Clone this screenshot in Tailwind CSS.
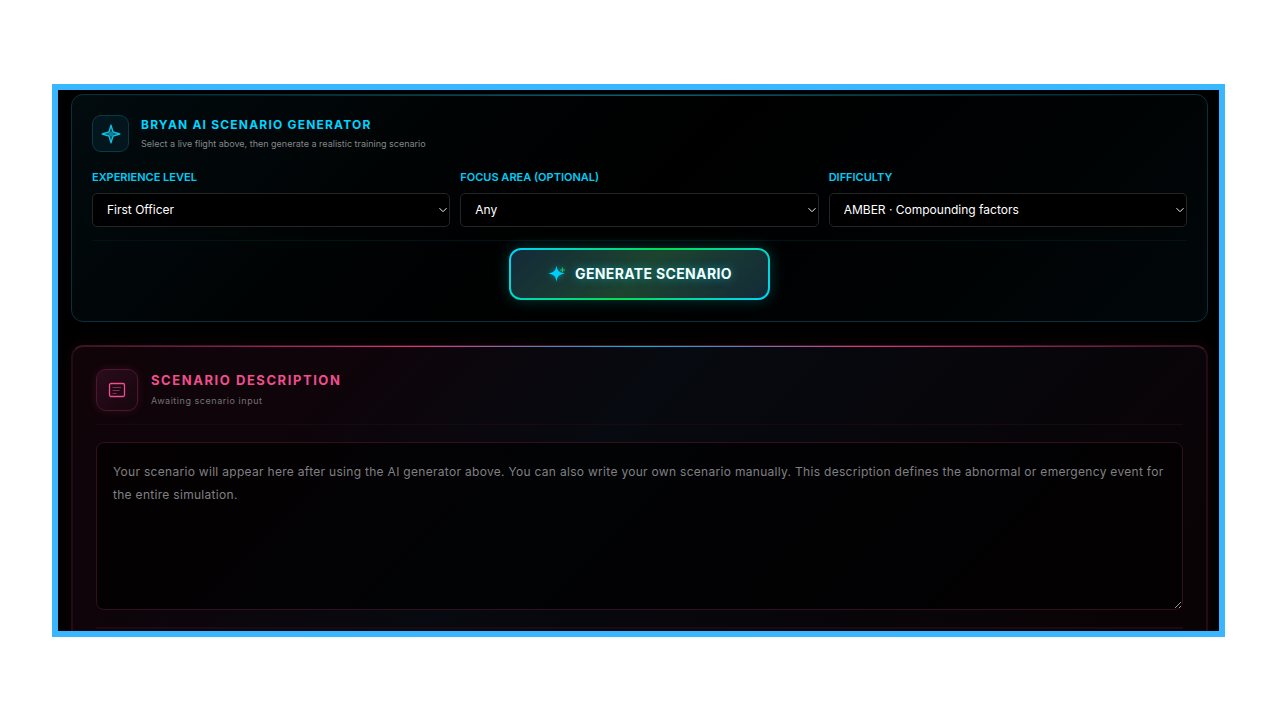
<!DOCTYPE html>
<html lang="en">
<head>
<meta charset="utf-8">
<meta name="viewport" content="width=device-width, initial-scale=1">
<title>Bryan AI Scenario Generator</title>
<script src="https://cdn.jsdelivr.net/npm/@tailwindcss/browser@4"></script>
</head>
<body class="bg-white font-['Inter',sans-serif]">
<main class="flex h-screen flex-col pt-[84px] pr-[55px] pb-[83px] pl-[52px]">
  <div class="flex min-h-0 flex-1 flex-col gap-[23px] overflow-hidden border-6 border-[#38b6ff] bg-black pt-1 pr-[11px] pl-[13px]">

    <section class="relative shrink-0 rounded-xl border border-[#07323d] bg-[linear-gradient(135deg,#020b0e_0%,#000304_30%,#000000_50%,#000203_70%,#010709_100%)] px-5 pt-5 pb-[21px]">
      <div class="absolute inset-x-3 top-0 h-px bg-[linear-gradient(90deg,transparent,#0d5f6e,transparent)]"></div>
      <header class="flex items-center gap-3">
        <div class="flex size-[37px] shrink-0 items-center justify-center rounded-[9px] border border-[#0a3a45] bg-[#04161d]">
          <svg class="size-5" viewBox="0 0 20 20" fill="none" aria-hidden="true">
            <path d="M10 1.200 12 8l6.800 2-6.800 2-2 6.800L8 12l-6.800-2L8 8Z" fill="#073c4a" stroke="#10bfe0" stroke-width="1.400" stroke-linejoin="round"/>
            <circle cx="10" cy="10" r="2.600" fill="#0b819c"/>
          </svg>
        </div>
        <div>
          <h2 class="text-xs leading-5 font-bold tracking-widest text-[#00d4ff]">BRYAN AI SCENARIO GENERATOR</h2>
          <p class="text-[9px] leading-[17px] text-[#858788]">Select a live flight above, then generate a realistic training scenario</p>
        </div>
      </header>

      <form class="mt-4">
        <div class="grid grid-cols-3 gap-[10px]">
          <div>
            <label for="experience" class="block text-[11px] leading-[18px] font-semibold text-[#00cdf5]">EXPERIENCE LEVEL</label>
            <div class="relative mt-[7px]">
              <select id="experience" class="block h-[34px] w-full appearance-none rounded-[5px] border border-[#242626] bg-black px-[14px] text-xs text-white"><option>First Officer</option></select>
              <svg class="pointer-events-none absolute top-[13px] right-[3px] h-2 w-2" viewBox="0 0 8 8" fill="none" stroke="#f0f0f0" aria-hidden="true"><path d="m.5 2.200 3.500 3.500 3.500-3.500"/></svg>
            </div>
          </div>
          <div>
            <label for="focus" class="block text-[11px] leading-[18px] font-semibold text-[#00cdf5]">FOCUS AREA (OPTIONAL)</label>
            <div class="relative mt-[7px]">
              <select id="focus" class="block h-[34px] w-full appearance-none rounded-[5px] border border-[#242626] bg-black px-[14px] text-xs text-white"><option>Any</option></select>
              <svg class="pointer-events-none absolute top-[13px] right-[3px] h-2 w-2" viewBox="0 0 8 8" fill="none" stroke="#f0f0f0" aria-hidden="true"><path d="m.5 2.200 3.500 3.500 3.500-3.500"/></svg>
            </div>
          </div>
          <div>
            <label for="difficulty" class="block text-[11px] leading-[18px] font-semibold text-[#00cdf5]">DIFFICULTY</label>
            <div class="relative mt-[7px]">
              <select id="difficulty" class="block h-[34px] w-full appearance-none rounded-[5px] border border-[#242626] bg-black px-[14px] text-xs text-white"><option>AMBER · Compounding factors</option></select>
              <svg class="pointer-events-none absolute top-[13px] right-[3px] h-2 w-2" viewBox="0 0 8 8" fill="none" stroke="#f0f0f0" aria-hidden="true"><path d="m.5 2.200 3.500 3.500 3.500-3.500"/></svg>
            </div>
          </div>
        </div>
        <div class="mt-[13px] flex justify-center border-t border-[#031216] pt-[7px]">
          <button type="button" class="rounded-xl bg-[linear-gradient(135deg,#00d4ff,#00e054_50%,#00d4ff)] p-[2px] shadow-[0_0_16px_rgba(0,212,200,0.28)]">
            <span class="flex h-12 items-center gap-2 rounded-[10px] bg-[linear-gradient(135deg,#132a38,#1d442f_50%,#132a38)] px-9 text-sm font-bold tracking-wide text-[#f4fffb] [text-shadow:0_0_10px_rgba(0,212,255,0.6)]">
              <svg class="size-5 drop-shadow-[0_0_3px_rgba(0,212,255,0.5)]" viewBox="0 0 20 20" aria-hidden="true">
                <path d="M9.500 1.500c.8 5 2.400 6.900 8.200 8-5.800 1.100-7.400 3-8.200 8.200-.8-5.200-2.400-7.100-8.200-8.200 5.800-1.100 7.400-3 8.200-8Z" fill="#00ccf8"/>
                <path d="M15.500 3.500v5M13 6h5" stroke="#12c454" stroke-width="1.200"/>
              </svg>
              GENERATE SCENARIO
            </span>
          </button>
        </div>
      </form>
    </section>

    <section class="relative shrink-0 rounded-xl border-2 border-[#240c17] border-t-[#3c1526] bg-[linear-gradient(135deg,#100408_0%,#0e040a_20%,#070a10_42%,#07060b_65%,#0a0305_90%)] px-[23px] pt-[22px] pb-6 shadow-[0_0_24px_rgba(233,69,130,0.06)]">
      <div class="absolute inset-x-2 -top-px h-px bg-[linear-gradient(90deg,transparent,#e03478_30%,#00b4e4_50%,#e03478_70%,transparent)]"></div>
      <header class="flex items-center gap-[13px] border-b border-[#190911] pb-[13px]">
        <div class="flex size-[42px] shrink-0 items-center justify-center rounded-[10px] border border-[#4c1730] bg-[linear-gradient(135deg,#2a0c1a,#16060e)] shadow-[0_0_10px_rgba(233,69,130,0.14)]">
          <svg class="size-5" viewBox="0 0 20 20" fill="none" stroke="#f04e8e" aria-hidden="true">
            <rect x="2.500" y="3.500" width="15" height="13" rx="1.500" stroke-width="1.300"/>
            <path d="M5.500 7.500h8.500M5.500 10.500h7M5.500 13.500h4" stroke-opacity=".55" stroke-width=".9"/>
          </svg>
        </div>
        <div>
          <h2 class="text-[13px] leading-[22px] font-bold tracking-[0.12em] text-[#f04e8e]">SCENARIO DESCRIPTION</h2>
          <p class="text-[9px] leading-5 tracking-[0.06em] text-[#747276]">Awaiting scenario input</p>
        </div>
      </header>
      <textarea aria-label="Scenario description" class="mt-[17px] block h-[168px] w-full resize rounded-lg border border-[#32101e] bg-black/65 px-4 py-[17px] text-xs leading-[23px] tracking-wide placeholder:text-[#808083]" placeholder="Your scenario will appear here after using the AI generator above. You can also write your own scenario manually. This description defines the abnormal or emergency event for the entire simulation."></textarea>
      <div class="mt-[17px] border-t-2 border-[#1d0913] pt-6"></div>
    </section>
  </div>
</main>
</body>
</html>
